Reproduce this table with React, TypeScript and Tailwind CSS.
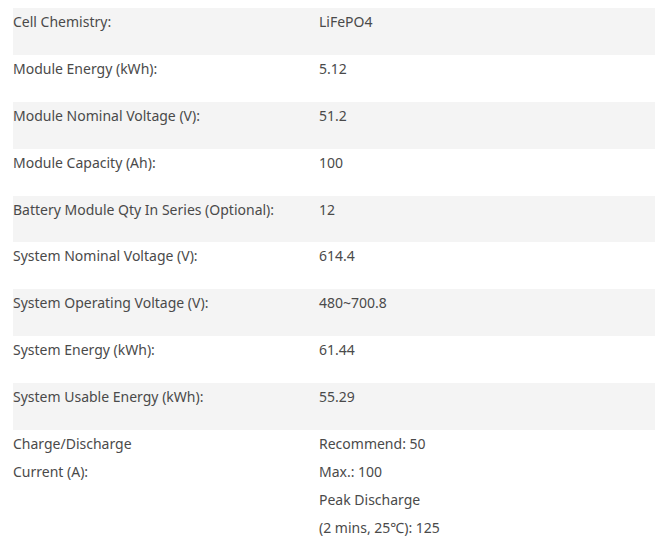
import React from "react";

const rows: [string[], string[]][] = [
  [["Cell Chemistry:"], ["LiFePO4"]],
  [["Module Energy (kWh):"], ["5.12"]],
  [["Module Nominal Voltage (V):"], ["51.2"]],
  [["Module Capacity (Ah):"], ["100"]],
  [["Battery Module Qty In Series (Optional):"], ["12"]],
  [["System Nominal Voltage (V):"], ["614.4"]],
  [["System Operating Voltage (V):"], ["480~700.8"]],
  [["System Energy (kWh):"], ["61.44"]],
  [["System Usable Energy (kWh):"], ["55.29"]],
  [
    ["Charge/Discharge", "Current (A):"],
    ["Recommend: 50", "Max.: 100", "Peak Discharge", "(2 mins, 25℃): 125"],
  ],
];

export default function App() {
  return (
    <div
      className="bg-white pt-[8px] pl-[13px] w-[655px] text-[14px] leading-[28px] text-[#4a4a4a]"
      style={{ fontFamily: '"Noto Sans", "Open Sans", sans-serif' }}
    >
      {rows.map(([label, value], i) => (
        <div
          key={i}
          className={`grid grid-cols-[306px_1fr] pb-[18.9px] ${i % 2 === 0 ? "bg-[#f4f4f4]" : "bg-white"}`}
        >
          <div>
            {label.map((l, j) => (
              <div key={j}>{l}</div>
            ))}
          </div>
          <div>
            {value.map((v, j) => (
              <div key={j}>{v}</div>
            ))}
          </div>
        </div>
      ))}
    </div>
  );
}
